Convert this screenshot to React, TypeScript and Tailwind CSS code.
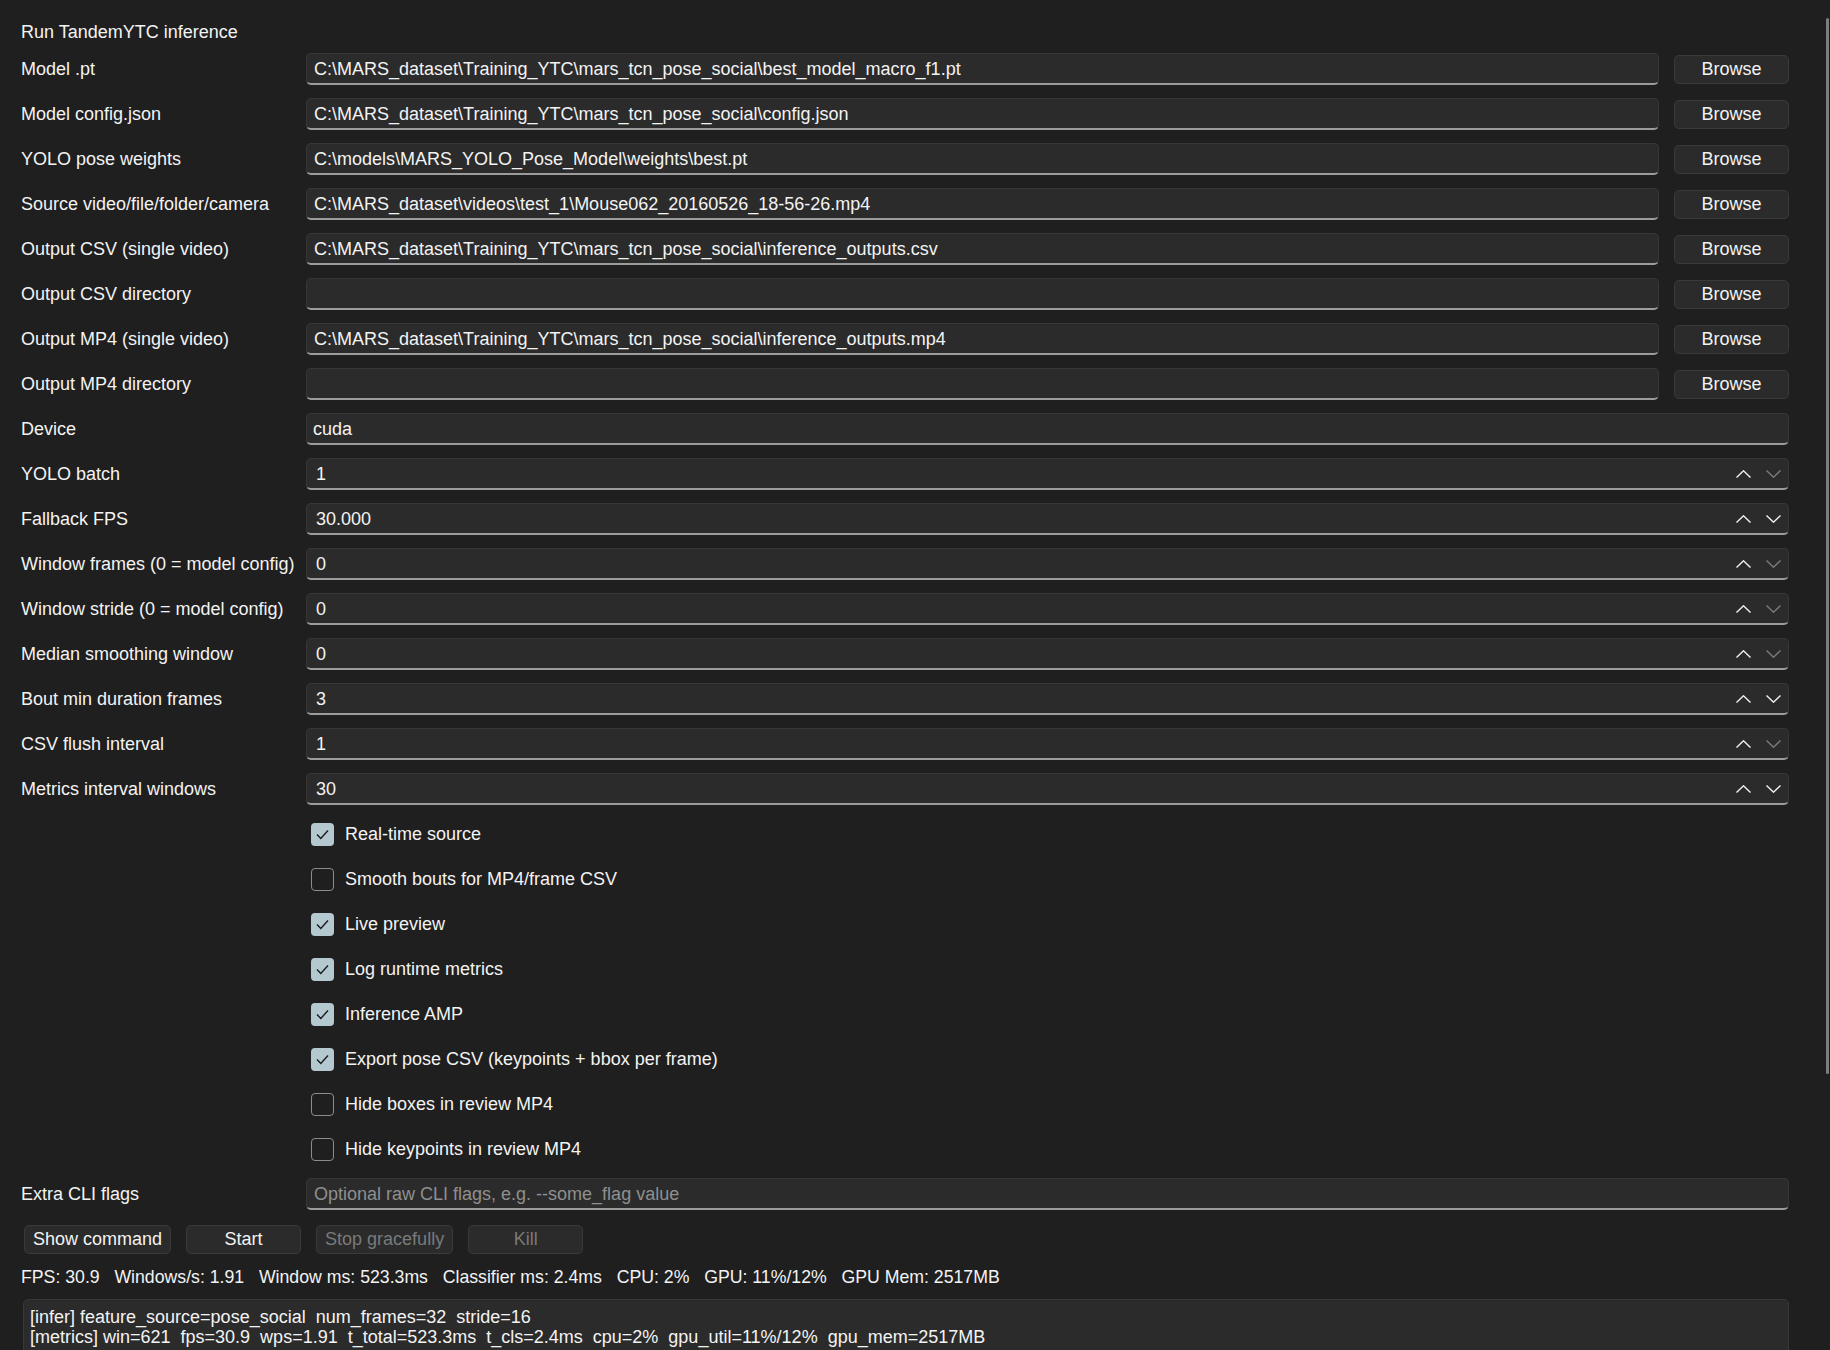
import React from 'react';

type PathRow = { label: string; value: string };
type SpinRow = { label: string; value: string; downDisabled: boolean };

const pathRows: PathRow[] = [
  { label: 'Model .pt', value: 'C:\\MARS_dataset\\Training_YTC\\mars_tcn_pose_social\\best_model_macro_f1.pt' },
  { label: 'Model config.json', value: 'C:\\MARS_dataset\\Training_YTC\\mars_tcn_pose_social\\config.json' },
  { label: 'YOLO pose weights', value: 'C:\\models\\MARS_YOLO_Pose_Model\\weights\\best.pt' },
  { label: 'Source video/file/folder/camera', value: 'C:\\MARS_dataset\\videos\\test_1\\Mouse062_20160526_18-56-26.mp4' },
  { label: 'Output CSV (single video)', value: 'C:\\MARS_dataset\\Training_YTC\\mars_tcn_pose_social\\inference_outputs.csv' },
  { label: 'Output CSV directory', value: '' },
  { label: 'Output MP4 (single video)', value: 'C:\\MARS_dataset\\Training_YTC\\mars_tcn_pose_social\\inference_outputs.mp4' },
  { label: 'Output MP4 directory', value: '' },
];

const spinRows: SpinRow[] = [
  { label: 'YOLO batch', value: '1', downDisabled: true },
  { label: 'Fallback FPS', value: '30.000', downDisabled: false },
  { label: 'Window frames (0 = model config)', value: '0', downDisabled: true },
  { label: 'Window stride (0 = model config)', value: '0', downDisabled: true },
  { label: 'Median smoothing window', value: '0', downDisabled: true },
  { label: 'Bout min duration frames', value: '3', downDisabled: false },
  { label: 'CSV flush interval', value: '1', downDisabled: true },
  { label: 'Metrics interval windows', value: '30', downDisabled: false },
];

const checks: { label: string; checked: boolean }[] = [
  { label: 'Real-time source', checked: true },
  { label: 'Smooth bouts for MP4/frame CSV', checked: false },
  { label: 'Live preview', checked: true },
  { label: 'Log runtime metrics', checked: true },
  { label: 'Inference AMP', checked: true },
  { label: 'Export pose CSV (keypoints + bbox per frame)', checked: true },
  { label: 'Hide boxes in review MP4', checked: false },
  { label: 'Hide keypoints in review MP4', checked: false },
];

const fieldCls =
  'h-[32px] pt-[1px] rounded-[5px] bg-[#2b2b2b] border border-[#373737] border-b-2 border-b-[#9c9c9c] flex items-center';

const Chevron = ({ up, dim }: { up: boolean; dim?: boolean }) => (
  <svg width="15" height="8" viewBox="0 0 15 8" className="block">
    <polyline
      points={up ? '0.5,7.5 7.5,0.8 14.5,7.5' : '0.5,0.5 7.5,7.2 14.5,0.5'}
      fill="none"
      stroke={dim ? '#7c7c7c' : '#f2f2f2'}
      strokeWidth="1.4"
    />
  </svg>
);

const Label = ({ children }: { children: React.ReactNode }) => (
  <div className="w-[285px] shrink-0 whitespace-nowrap">{children}</div>
);

const Button = ({ children, disabled }: { children: React.ReactNode; disabled?: boolean }) => (
  <div
    className={
      'h-[29px] min-w-[115px] px-[8px] rounded-[5px] bg-[#2b2b2b] border border-[#3a3a3a] flex items-center justify-center whitespace-nowrap ' +
      (disabled ? 'text-[#7a7a7a]' : 'text-[#f3f3f3]')
    }
  >
    {children}
  </div>
);

const App = () => {
  return (
    <div className="relative h-[1350px] w-full overflow-hidden bg-[#1f1f1f] text-[#f3f3f3] font-['Liberation_Sans',Arial,sans-serif] text-[18px]">
      <div className="pl-[21px] pr-[41px] pt-[16px]">
        <div className="h-[32px] mb-[5px] flex items-center">Run TandemYTC inference</div>

        <div className="flex flex-col gap-[13px]">
          {pathRows.map((r) => (
            <div key={r.label} className="flex h-[32px] items-center">
              <Label>{r.label}</Label>
              <div className={fieldCls + ' flex-1 min-w-0 px-[7px]'}>
                <span className="whitespace-nowrap">{r.value}</span>
              </div>
              <div className="ml-[15px]">
                <Button>Browse</Button>
              </div>
            </div>
          ))}

          <div className="flex h-[32px] items-center">
            <Label>Device</Label>
            <div className={fieldCls + ' flex-1 px-[6px]'}>cuda</div>
          </div>

          {spinRows.map((r) => (
            <div key={r.label} className="flex h-[32px] items-center">
              <Label>{r.label}</Label>
              <div className={fieldCls + ' flex-1 pl-[9px] pr-[7px] justify-between'}>
                <span>{r.value}</span>
                <div className="flex items-center gap-[15px]">
                  <Chevron up />
                  <Chevron up={false} dim={r.downDisabled} />
                </div>
              </div>
            </div>
          ))}

          {checks.map((c) => (
            <div key={c.label} className="flex h-[32px] items-center pl-[290px]">
              {c.checked ? (
                <div className="w-[23px] h-[23px] rounded-[4px] bg-[#b3c8cf] flex items-center justify-center">
                  <svg width="23" height="23" viewBox="0 0 23 23">
                    <polyline points="6,11.5 9.8,15.5 17,7.5" fill="none" stroke="#1b1b1b" strokeWidth="1.4" />
                  </svg>
                </div>
              ) : (
                <div className="w-[23px] h-[23px] rounded-[4px] border-[1.5px] border-[#8c8c8c]" />
              )}
              <span className="ml-[11px] whitespace-nowrap">{c.label}</span>
            </div>
          ))}

          <div className="flex h-[32px] items-center">
            <Label>Extra CLI flags</Label>
            <div className={fieldCls + ' flex-1 px-[7px] text-[#8f8f8f]'}>
              Optional raw CLI flags, e.g. --some_flag value
            </div>
          </div>

          <div className="flex h-[32px] items-center gap-[15px] pl-[3px]">
            <Button>Show command</Button>
            <Button>Start</Button>
            <Button disabled>Stop gracefully</Button>
            <Button disabled>Kill</Button>
          </div>

          <div className="h-[18px] flex items-center whitespace-pre text-[17.7px]">
            {'FPS: 30.9   Windows/s: 1.91   Window ms: 523.3ms   Classifier ms: 2.4ms   CPU: 2%   GPU: 11%/12%   GPU Mem: 2517MB'}
          </div>

          <div className="ml-[2px] h-[120px] rounded-[5px] bg-[#2b2b2b] border border-[#373737] px-[6px] pt-[7px] leading-[20px] whitespace-pre">
            <div>{'[infer] feature_source=pose_social  num_frames=32  stride=16'}</div>
            <div>
              {'[metrics] win=621  fps=30.9  wps=1.91  t_total=523.3ms  t_cls=2.4ms  cpu=2%  gpu_util=11%/12%  gpu_mem=2517MB'}
            </div>
          </div>
        </div>
      </div>

      <div className="absolute right-[1px] top-[18px] h-[1056px] w-[3px] rounded-full bg-[#7d7d7d]" />
    </div>
  );
};

export default App;
